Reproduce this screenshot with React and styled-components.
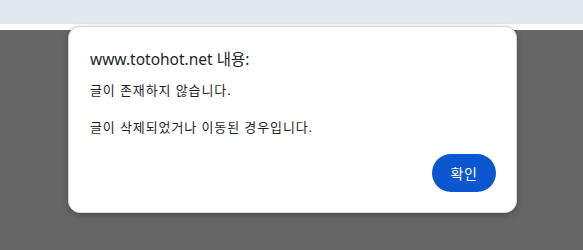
import React from 'react';
import styled, { createGlobalStyle } from 'styled-components';

const GlobalStyle = createGlobalStyle`
  html, body {
    margin: 0;
    padding: 0;
    background: #ffffff;
  }
`;

const Page = styled.div`
  position: relative;
  width: 583px;
  height: 250px;
  display: flex;
  flex-direction: column;
  overflow: hidden;
  font-family: 'Noto Sans', 'Noto Sans CJK KR', sans-serif;
`;

const TopBar = styled.div`
  height: 24px;
  background-color: #e3e7f0;
`;

const Strip = styled.div`
  height: 6px;
  background-color: #ffffff;
`;

const Overlay = styled.div`
  flex: 1;
  background-color: #666666;
`;

const Dialog = styled.div`
  position: absolute;
  top: 26px;
  left: 68px;
  width: 449px;
  height: 187px;
  box-sizing: border-box;
  padding: 22px 20px 20px 21px;
  display: flex;
  flex-direction: column;
  background-color: #ffffff;
  border: 1px solid #d6d6d6;
  border-radius: 12px;
  box-shadow: 0 2px 6px rgba(0, 0, 0, 0.25);
`;

const Title = styled.div`
  font-size: 15.5px;
  line-height: 20px;
  color: #1f1f1f;
`;

const Message = styled.div`
  margin-top: 12px;
  font-size: 13px;
  line-height: 18.5px;
  letter-spacing: 0.9px;
  color: #1f1f1f;
  white-space: pre-line;
  flex: 1;
`;

const Actions = styled.div`
  display: flex;
  justify-content: flex-end;
`;

const Button = styled.button`
  width: 64px;
  height: 38px;
  border: none;
  border-radius: 19px;
  background-color: #0b57d0;
  color: #ffffff;
  font-family: 'Noto Sans CJK KR', sans-serif;
  font-size: 14px;
  letter-spacing: 0.5px;
  cursor: pointer;
`;

const App = () => {
  return (
    <Page>
      <GlobalStyle />
      <TopBar />
      <Strip />
      <Overlay />
      <Dialog>
        <Title>www.totohot.net 내용:</Title>
        <Message>{'글이 존재하지 않습니다.\n\n글이 삭제되었거나 이동된 경우입니다.'}</Message>
        <Actions>
          <Button>확인</Button>
        </Actions>
      </Dialog>
    </Page>
  );
};

export default App;
